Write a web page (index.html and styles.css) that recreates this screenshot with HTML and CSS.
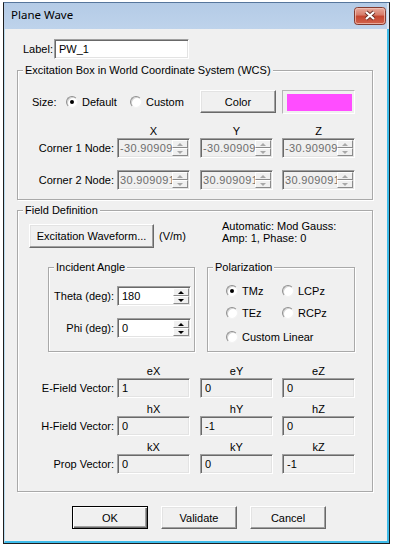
FILE: index.html
```html
<!DOCTYPE html>
<html>
<head>
<meta charset="utf-8">
<title>Plane Wave</title>
<link rel="stylesheet" href="styles.css">
</head>
<body>
<div class="window">
  <div class="titlebar">
    <span class="title">Plane Wave</span>
    <span class="close">
      <svg width="32" height="18" viewBox="0 0 32 18">
        <defs>
          <linearGradient id="cg" x1="0" y1="0" x2="0" y2="1">
            <stop offset="0" stop-color="#e9ad9f"/>
            <stop offset="0.45" stop-color="#d67a68"/>
            <stop offset="0.5" stop-color="#c5452f"/>
            <stop offset="1" stop-color="#d2654e"/>
          </linearGradient>
        </defs>
        <rect x="0.5" y="0.5" width="31" height="17" rx="3" fill="url(#cg)" stroke="#823b2f"/>
        <rect x="1.5" y="1.5" width="29" height="15" rx="2" fill="none" stroke="#f4c9bd" stroke-opacity="0.7"/>
        <path d="M12 5 L20 12 M20 5 L12 12" stroke="#6a3028" stroke-width="4"/>
        <path d="M12 5 L20 12 M20 5 L12 12" stroke="#ffffff" stroke-width="2.2"/>
      </svg>
    </span>
  </div>
  <div class="client">
    <div class="label-row">
      <span class="label-text">Label:</span>
      <div class="edit edit-white label-edit"><span class="val">PW_1</span></div>
    </div>

    <fieldset class="group wcs">
      <legend>Excitation Box in World Coordinate System (WCS)</legend>
      <div class="size-row">
        <span class="size-text">Size:</span>
        <span class="opt opt-default"><span class="radio on"></span>Default</span>
        <span class="opt opt-custom"><span class="radio"></span>Custom</span>
        <button class="btn btn-color">Color</button>
        <span class="swatch"><span class="swatch-fill"></span></span>
      </div>
      <div class="vrow vhead vhead-first">
        <span class="rlabel"></span><span class="cell">X</span><span class="cell">Y</span><span class="cell">Z</span>
      </div>
      <div class="vrow">
        <span class="rlabel">Corner 1 Node:</span>
        <div class="cell edit disabled"><span class="val">-30.90909</span><span class="spin"><span class="sb up"></span><span class="sb down"></span></span></div>
        <div class="cell edit disabled"><span class="val">-30.90909</span><span class="spin"><span class="sb up"></span><span class="sb down"></span></span></div>
        <div class="cell edit disabled"><span class="val">-30.90909</span><span class="spin"><span class="sb up"></span><span class="sb down"></span></span></div>
      </div>
      <div class="vrow corner2">
        <span class="rlabel">Corner 2 Node:</span>
        <div class="cell edit disabled"><span class="val">30.909091</span><span class="spin"><span class="sb up"></span><span class="sb down"></span></span></div>
        <div class="cell edit disabled"><span class="val">30.909091</span><span class="spin"><span class="sb up"></span><span class="sb down"></span></span></div>
        <div class="cell edit disabled"><span class="val">30.909091</span><span class="spin"><span class="sb up"></span><span class="sb down"></span></span></div>
      </div>
    </fieldset>

    <fieldset class="group field">
      <legend>Field Definition</legend>
      <div class="exc-row">
        <button class="btn btn-exc">Excitation Waveform...</button>
        <span class="units">(V/m)</span>
        <span class="info">Automatic: Mod Gauss:<br>Amp: 1, Phase: 0</span>
      </div>
      <div class="sub-row">
        <fieldset class="group incident">
          <legend>Incident Angle</legend>
          <div class="angle-row">
            <span class="alabel">Theta (deg):</span>
            <div class="edit edit-white angle-edit"><span class="val">180</span><span class="spin"><span class="sb up"></span><span class="sb down"></span></span></div>
          </div>
          <div class="angle-row">
            <span class="alabel">Phi (deg):</span>
            <div class="edit edit-white angle-edit"><span class="val">0</span><span class="spin"><span class="sb up"></span><span class="sb down"></span></span></div>
          </div>
        </fieldset>
        <fieldset class="group polar">
          <legend>Polarization</legend>
          <div class="prow prow1">
            <span class="opt opt-p1"><span class="radio on"></span>TMz</span>
            <span class="opt"><span class="radio"></span>LCPz</span>
          </div>
          <div class="prow prow2">
            <span class="opt opt-p1"><span class="radio"></span>TEz</span>
            <span class="opt"><span class="radio"></span>RCPz</span>
          </div>
          <div class="prow prow3">
            <span class="opt"><span class="radio"></span>Custom Linear</span>
          </div>
        </fieldset>
      </div>

      <div class="vrow vhead vhead-e">
        <span class="rlabel"></span><span class="cell">eX</span><span class="cell">eY</span><span class="cell">eZ</span>
      </div>
      <div class="vrow">
        <span class="rlabel">E-Field Vector:</span>
        <div class="cell edit ro"><span class="val">1</span></div>
        <div class="cell edit ro"><span class="val">0</span></div>
        <div class="cell edit ro"><span class="val">0</span></div>
      </div>
      <div class="vrow vhead vhead-n">
        <span class="rlabel"></span><span class="cell">hX</span><span class="cell">hY</span><span class="cell">hZ</span>
      </div>
      <div class="vrow">
        <span class="rlabel">H-Field Vector:</span>
        <div class="cell edit ro"><span class="val">0</span></div>
        <div class="cell edit ro"><span class="val">-1</span></div>
        <div class="cell edit ro"><span class="val">0</span></div>
      </div>
      <div class="vrow vhead vhead-n">
        <span class="rlabel"></span><span class="cell">kX</span><span class="cell">kY</span><span class="cell">kZ</span>
      </div>
      <div class="vrow">
        <span class="rlabel">Prop Vector:</span>
        <div class="cell edit ro"><span class="val">0</span></div>
        <div class="cell edit ro"><span class="val">0</span></div>
        <div class="cell edit ro"><span class="val">-1</span></div>
      </div>
    </fieldset>

    <div class="buttons">
      <button class="btn btn-bottom btn-default">OK</button>
      <button class="btn btn-bottom">Validate</button>
      <button class="btn btn-bottom">Cancel</button>
    </div>
  </div>
</div>
</body>
</html>
```

FILE: styles.css
```css
* { box-sizing: border-box; }

html, body {
  margin: 0;
  padding: 0;
  background: #ffffff;
}

body {
  width: 394px;
  height: 547px;
  overflow: hidden;
  font-family: "Liberation Sans", Arial, sans-serif;
  font-size: 11px;
  color: #000000;
}

.window {
  margin: 2px 0 0 3px;
  width: 387px;
  height: 542px;
  border: 1px solid #1e1e1e;
  border-top-color: #56769c;
  display: flex;
  flex-direction: column;
  background: #f0f0f0;
}

.titlebar {
  flex: none;
  height: 26px;
  display: flex;
  justify-content: space-between;
  align-items: flex-start;
  background: linear-gradient(#b4cbe6, #bed3eb);
  border-right: 2px solid #d9e6f4;
}

.title {
  font-family: "Noto Sans", "Liberation Sans", sans-serif;
  font-size: 11.5px;
  line-height: 24px;
  padding-left: 7px;
  color: #000;
}

.close {
  display: block;
  width: 32px;
  height: 18px;
  margin: 4px 1px 0 0;
}
.close svg { display: block; }

.client {
  flex: 1;
  background: #f0f0f0;
  border-left: 1px solid #b9dcef;
  border-right: 2px solid #3fbcea;
  border-bottom: 2px solid #3fbcea;
  padding: 9px 14px 0 12px;
  display: flex;
  flex-direction: column;
}

/* Label row */
.label-row {
  display: flex;
  align-items: center;
  padding-left: 6px;
  height: 21px;
}
.label-text { width: 31px; }
.label-edit { width: 135px; height: 21px; }

/* Edit boxes */
.edit {
  display: flex;
  align-items: center;
  height: 20px;
  overflow: hidden;
  background: #f0f0f0;
  border: 1px solid;
  border-color: #a0a0a0 #ffffff #ffffff #a0a0a0;
  box-shadow: inset 1px 1px 0 #696969, inset -1px -1px 0 #e3e3e3;
  padding: 0 1px 0 4px;
}
.edit-white { background: #ffffff; }
.edit.disabled { padding-left: 2px; color: #6d6d6d; }
.val {
  flex: 1;
  min-width: 0;
  overflow: hidden;
  white-space: nowrap;
  line-height: 14px;
}
.edit.disabled .val { letter-spacing: 0.35px; }

.spin {
  flex: none;
  display: flex;
  flex-direction: column;
  width: 16px;
}
.sb {
  display: flex;
  align-items: center;
  justify-content: center;
  height: 8px;
  background: #f0f0f0;
  border: 1px solid;
  border-color: #ffffff #8a8a8a #8a8a8a #ffffff;
}
.sb::after {
  content: "";
  width: 0;
  height: 0;
  border-left: 3px solid transparent;
  border-right: 3px solid transparent;
}
.sb.up::after { border-bottom: 3px solid #000; }
.sb.down::after { border-top: 3px solid #000; }
.disabled .sb.up::after { border-bottom-color: #a8a8a8; }
.disabled .sb.down::after { border-top-color: #a8a8a8; }

/* Group boxes */
.group {
  margin: 0;
  padding: 0;
  min-width: 0;
  border: 1px solid #a9a9a9;
  box-shadow: inset 1px 1px 0 #ffffff, 1px 1px 0 #ffffff;
}
.group legend {
  padding: 0 2px;
  margin-left: 5px;
  line-height: 13px;
  background: #f0f0f0;
}

.wcs {
  margin-top: 5px;
  padding-bottom: 9px;
}

.size-row {
  display: flex;
  align-items: center;
  margin-top: 13px;
  height: 23px;
  padding-left: 14px;
}
.size-text { width: 34px; }
.opt {
  display: flex;
  align-items: center;
  white-space: nowrap;
}
.opt-default { width: 64px; }
.opt-custom { width: 70px; }

.radio {
  position: relative;
  flex: none;
  width: 12px;
  height: 12px;
  margin-right: 4px;
  border-radius: 50%;
  background: #ffffff;
  border: 1px solid;
  border-color: #8f8f8f #f2f2f2 #f2f2f2 #8f8f8f;
  box-shadow: inset 1px 1px 0 #d4d4d4;
}
.radio.on::after {
  content: "";
  position: absolute;
  left: 3px;
  top: 3px;
  width: 4px;
  height: 4px;
  border-radius: 50%;
  background: #000;
}

.btn {
  margin: 0;
  padding: 0;
  font-family: "Liberation Sans", Arial, sans-serif;
  font-size: 11px;
  color: #000;
  background: #f0f0f0;
  border: 1px solid;
  border-color: #ffffff #696969 #696969 #ffffff;
  box-shadow: inset -1px -1px 0 #a0a0a0, inset 1px 1px 0 #e3e3e3;
  display: flex;
  align-items: center;
  justify-content: center;
}
.btn-color { width: 76px; height: 23px; }

.swatch {
  display: block;
  margin-left: 6px;
  width: 73px;
  height: 24px;
  border: 1px solid;
  border-color: #b4b4b4 #ffffff #ffffff #b4b4b4;
  padding: 3px 2px 2px 4px;
}
.swatch-fill {
  display: block;
  width: 100%;
  height: 100%;
  background: #ff4dff;
}

/* Vector / coordinate rows */
.vrow {
  display: flex;
  align-items: center;
  height: 20px;
}
.rlabel {
  width: 96px;
  text-align: right;
  white-space: nowrap;
}
.cell { width: 73px; flex: none; }
.rlabel + .cell { margin-left: 3px; }
.cell + .cell { margin-left: 10px; }
.cell + .cell + .cell { margin-left: 9px; }

.vhead {
  height: 13px;
  line-height: 13px;
}
.vhead .cell { text-align: center; }
.vhead-first { margin-top: 12px; }
.corner2 { margin-top: 12px; }
.vhead-e { margin-top: 13px; }
.vhead-n { margin-top: 5px; }

.edit.ro { padding-left: 4px; }

/* Field definition */
.field {
  margin-top: 4px;
  padding-bottom: 17px;
}

.exc-row {
  display: flex;
  align-items: flex-start;
  margin-top: 3px;
  padding-left: 11px;
}
.btn-exc {
  margin-top: 4px;
  width: 125px;
  height: 24px;
}
.units {
  margin-top: 4px;
  margin-left: 5px;
  width: 63px;
  line-height: 25px;
}
.info { line-height: 12px; }

.sub-row {
  display: flex;
  margin-top: 12px;
  padding-left: 30px;
  gap: 12px;
}
.incident {
  width: 147px;
  padding-bottom: 13px;
}
.polar { width: 148px; }

.angle-row {
  display: flex;
  align-items: center;
  margin-top: 12px;
}
.alabel {
  width: 65px;
  text-align: right;
  margin-right: 3px;
  white-space: nowrap;
}
.angle-edit { width: 74px; height: 20px; }

.prow {
  display: flex;
  align-items: center;
  height: 16px;
  padding-left: 18px;
}
.prow1 { margin-top: 9px; }
.prow2 { margin-top: 6px; }
.prow3 { margin-top: 8px; }
.opt-p1 { width: 56px; }

/* Bottom buttons */
.buttons {
  display: flex;
  margin-top: 14px;
  padding-left: 55px;
  gap: 13px;
}
.btn-bottom { width: 76px; height: 23px; }
.btn-default {
  border-color: #000000;
  box-shadow: inset 1px 1px 0 #ffffff, inset -1px -1px 0 #696969, inset -2px -2px 0 #a0a0a0;
}
```
